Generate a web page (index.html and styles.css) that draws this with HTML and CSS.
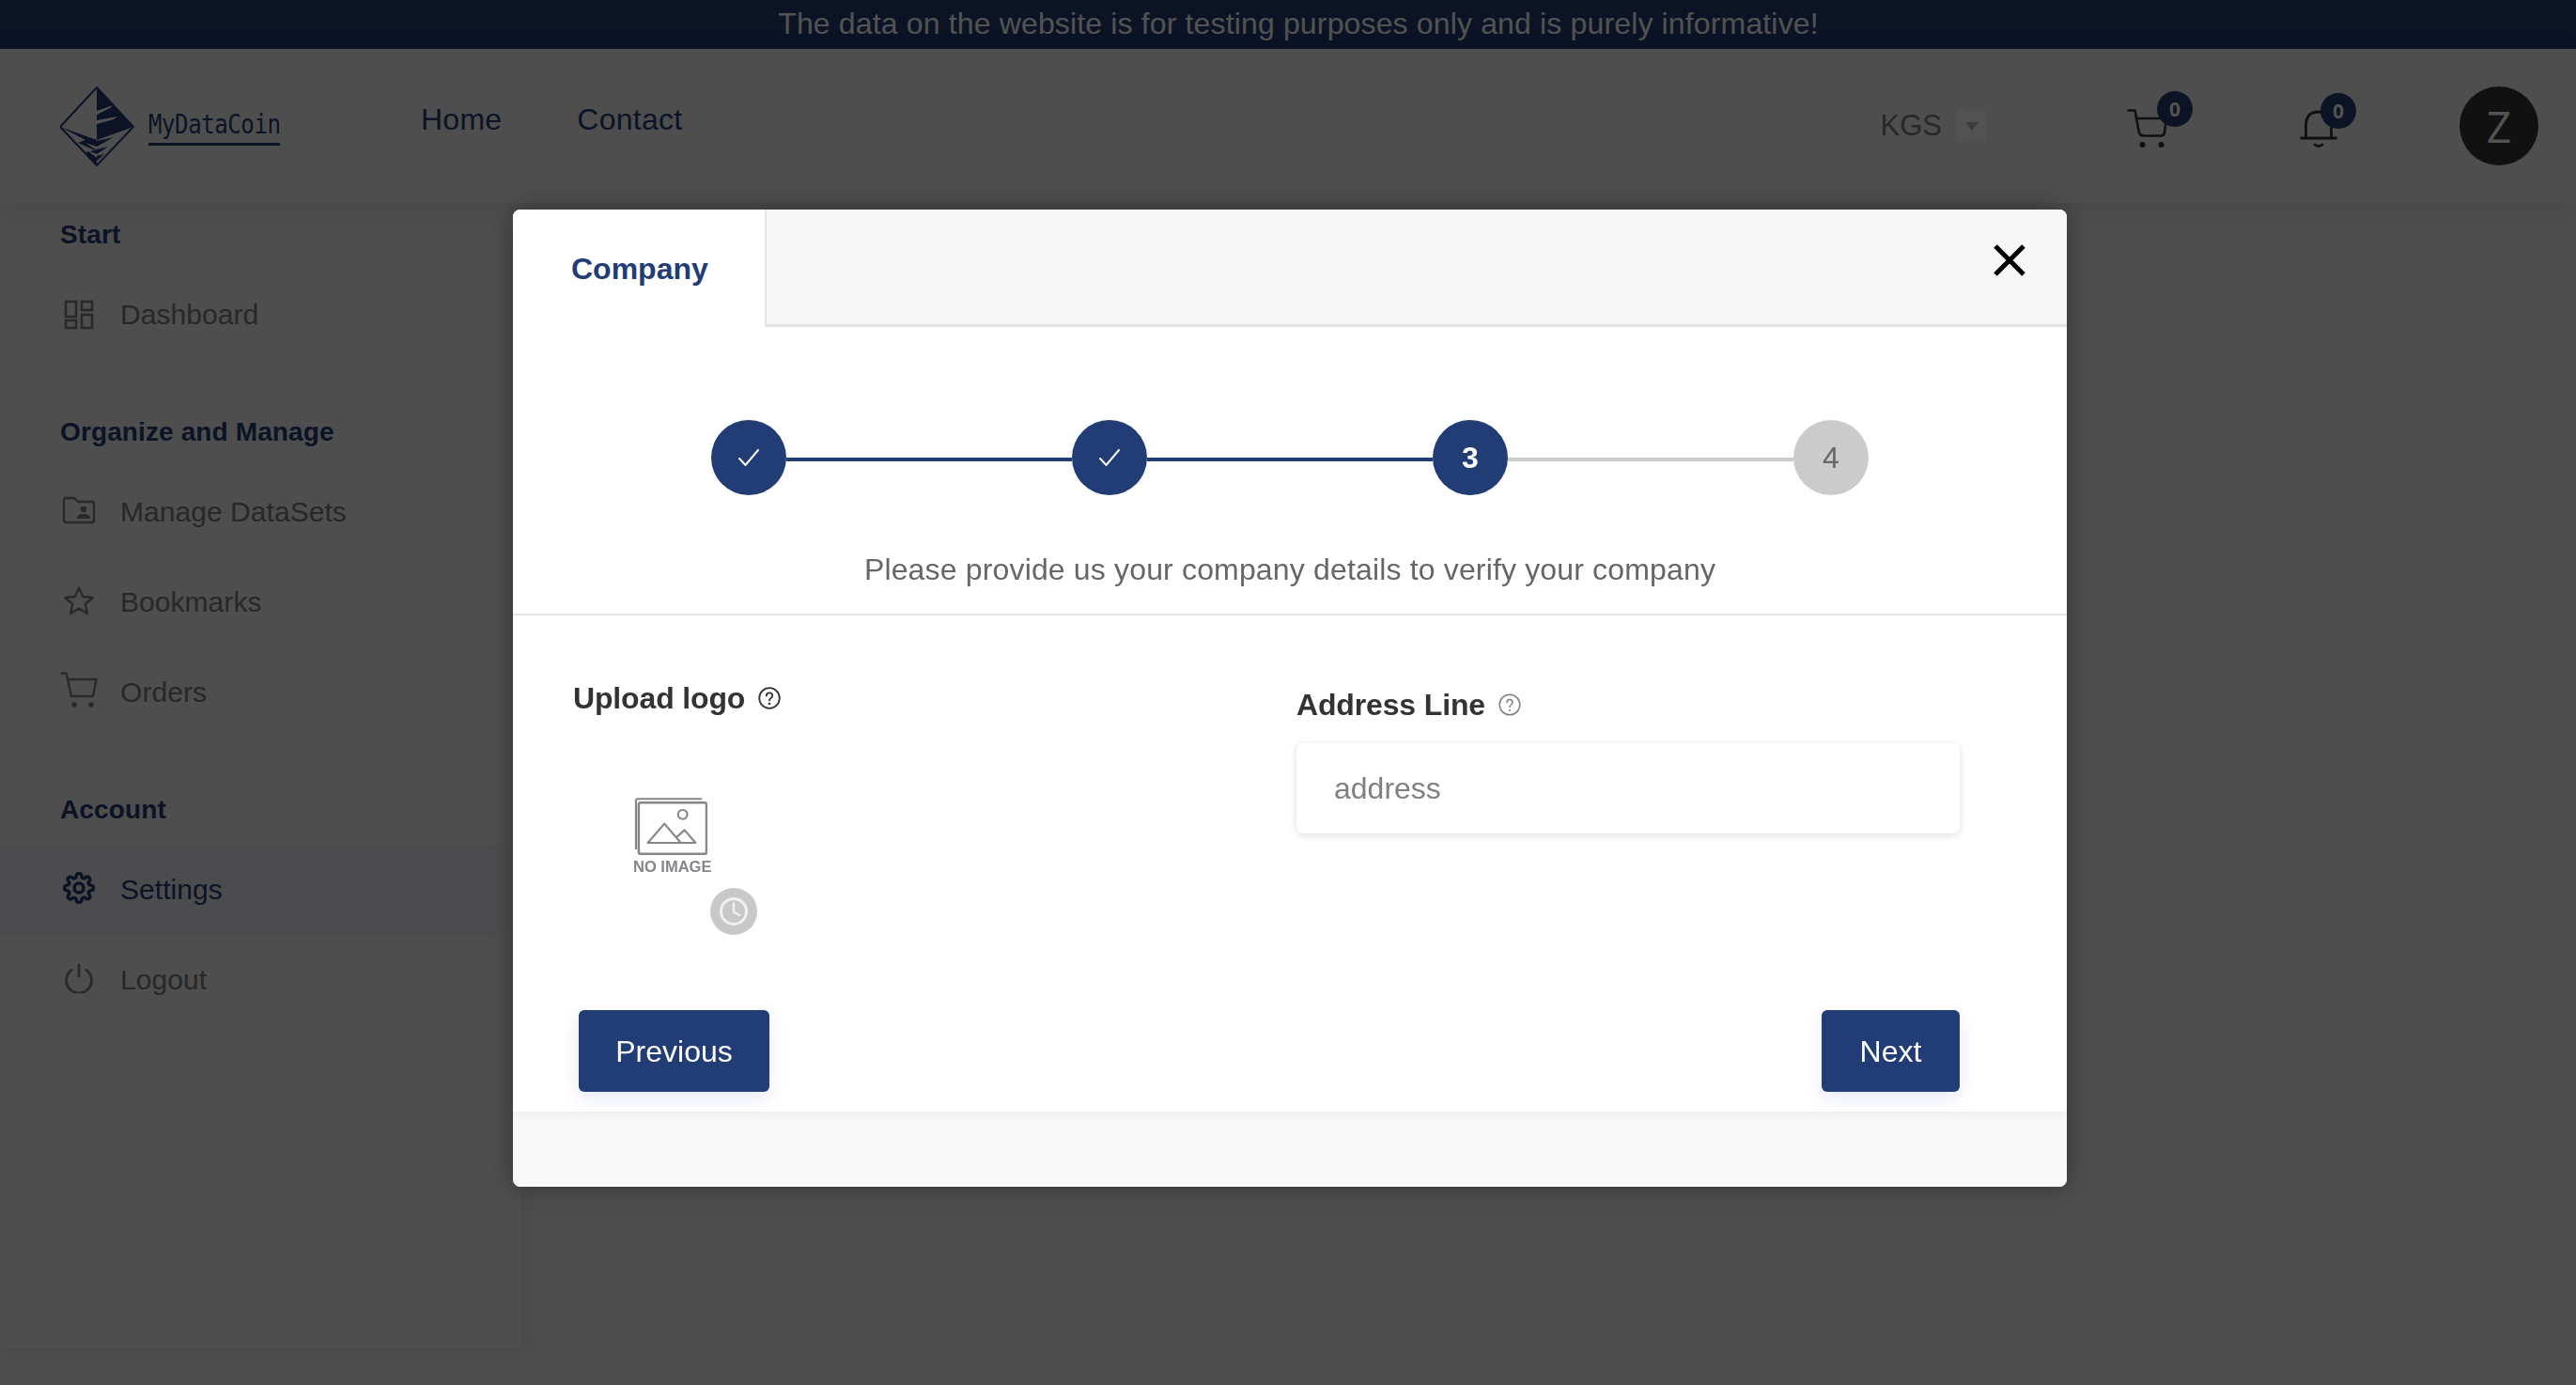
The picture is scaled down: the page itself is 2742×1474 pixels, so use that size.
FILE: index.html
```html
<!DOCTYPE html>
<html lang="en">
<head>
<meta charset="utf-8">
<title>MyDataCoin</title>
<link rel="stylesheet" href="styles.css">
</head>
<body>
<div class="banner">The data on the website is for testing purposes only and is purely informative!</div>
<header class="topbar">
  <div class="brand">
    <svg class="brand-mark" viewBox="9 6 80 85">
      <path d="M48 7 87 49 48 90 9 49Z" fill="none" stroke="#223c75" stroke-width="2"/>
      <path d="M48 7 87 49 48 63Z" fill="#223c75"/>
      <path d="M9 49 48 63V90L36 76 46 74 28 66 36 63Z" fill="#223c75"/>
      <path d="M48 64 66 60 48 70ZM48 73 60 70 48 78ZM48 80 56 78 48 85Z" fill="#223c75"/>
      <path d="M48 32 65 26 62 29 48 36ZM48 42 70 38 66 41 48 46Z" fill="#fff"/>
      <path d="M48 70 36 66 48 74ZM48 78 38 74 48 82Z" fill="#fff"/>
    </svg>
    <span class="brand-name"><span class="brand-text">MyDataCoin</span></span>
  </div>
  <nav class="topnav">
    <a class="topnav-link">Home</a>
    <a class="topnav-link">Contact</a>
  </nav>
  <div class="currency">
    <span class="currency-code">KGS</span>
    <span class="currency-drop"><i class="caret"></i></span>
  </div>
  <div class="tool tool-cart">
    <svg class="tool-icon" viewBox="14 26 42 42" fill="none" stroke="#333" stroke-width="2.6" stroke-linecap="round" stroke-linejoin="round">
      <path d="M15.5 27.5H22.5L26.5 49Q27.2 54.5 32 54.5H50Q53.5 54.5 54 51L56 36H24.5"/>
      <circle cx="30.5" cy="64" r="3" fill="#333" stroke="none"/>
      <circle cx="50.5" cy="64" r="3" fill="#333" stroke="none"/>
    </svg>
    <span class="count count-cart">0</span>
  </div>
  <div class="tool tool-bell">
    <svg class="tool-icon" viewBox="198 26 40 42" fill="none" stroke="#333" stroke-width="2.8" stroke-linecap="round" stroke-linejoin="round">
      <path d="M204.500 56V44Q204.500 29 218 29Q231.500 29 231.500 44V56"/>
      <path d="M199.500 57H236.500"/>
      <path d="M214 64Q218 67 222 64"/>
    </svg>
    <span class="count count-bell">0</span>
  </div>
  <div class="avatar">Z</div>
</header>

<div class="workspace">
  <aside class="sidebar">
    <h3 class="side-title side-title-first">Start</h3>
    <a class="side-item">
      <span class="side-icon">
        <svg width="32" height="32" viewBox="0 0 32 32" fill="none" stroke="#808080" stroke-width="2.6"><rect x="2" y="2" width="11" height="16"/><rect x="19" y="2" width="11" height="9"/><rect x="2" y="22" width="11" height="8"/><rect x="19" y="16" width="11" height="14"/></svg>
      </span>Dashboard
    </a>
    <h3 class="side-title">Organize and Manage</h3>
    <a class="side-item">
      <span class="side-icon side-icon-up">
        <svg width="36" height="30" viewBox="0 0 36 30" fill="none" stroke="#808080" stroke-width="2.4" stroke-linejoin="round"><path d="M2 26V4Q2 2 4 2H13L17 6H32Q34 6 34 8V26Q34 28 32 28H4Q2 28 2 26Z"/><circle cx="23" cy="14" r="3.200" fill="#808080" stroke="none"/><path d="M16 24Q16 19 23 19Q30 19 30 24Z" fill="#808080" stroke="none"/></svg>
      </span>Manage DataSets
    </a>
    <a class="side-item">
      <span class="side-icon side-icon-up">
        <svg width="34" height="32" viewBox="0 0 34 32" fill="none" stroke="#808080" stroke-width="2.400" stroke-linejoin="round"><path d="M17 2.500 21.300 12 31.500 13 23.800 19.800 26 30 17 24.800 8 30 10.200 19.800 2.500 13 12.700 12Z"/></svg>
      </span>Bookmarks
    </a>
    <a class="side-item">
      <span class="side-icon side-icon-up">
        <svg width="40" height="40" viewBox="0 0 40 40" fill="none" stroke="#808080" stroke-width="2.400" stroke-linecap="round" stroke-linejoin="round"><path d="M1.500 1.500H6.500L12 26H35L38.500 8H8"/><circle cx="15" cy="35" r="2.800" fill="#808080" stroke="none"/><circle cx="33" cy="35" r="2.800" fill="#808080" stroke="none"/></svg>
      </span>Orders
    </a>
    <h3 class="side-title">Account</h3>
    <a class="side-item side-item-active">
      <span class="side-icon side-icon-up">
        <svg width="34" height="34" viewBox="0 0 24 24" fill="none" stroke="#223c75" stroke-width="2.500" stroke-linejoin="round"><circle cx="12" cy="12" r="3.500"/><path d="M19.400 15a1.650 1.650 0 0 0 .33 1.820l.06.06a2 2 0 0 1 0 2.830 2 2 0 0 1-2.830 0l-.06-.06a1.650 1.650 0 0 0-1.820-.33 1.650 1.650 0 0 0-1 1.510V21a2 2 0 0 1-2 2 2 2 0 0 1-2-2v-.09A1.650 1.650 0 0 0 9 19.400a1.650 1.650 0 0 0-1.820.33l-.06.06a2 2 0 0 1-2.830 0 2 2 0 0 1 0-2.830l.06-.06a1.650 1.650 0 0 0 .33-1.820 1.650 1.650 0 0 0-1.510-1H3a2 2 0 0 1-2-2 2 2 0 0 1 2-2h.09A1.650 1.650 0 0 0 4.600 9a1.650 1.650 0 0 0-.33-1.820l-.06-.06a2 2 0 0 1 0-2.830 2 2 0 0 1 2.830 0l.06.06a1.650 1.650 0 0 0 1.820.33H9a1.650 1.650 0 0 0 1-1.510V3a2 2 0 0 1 2-2 2 2 0 0 1 2 2v.09a1.650 1.650 0 0 0 1 1.510 1.650 1.650 0 0 0 1.820-.33l.06-.06a2 2 0 0 1 2.830 0 2 2 0 0 1 0 2.830l-.06.06a1.650 1.650 0 0 0-.33 1.820V9a1.650 1.650 0 0 0 1.510 1H21a2 2 0 0 1 2 2 2 2 0 0 1-2 2h-.09a1.650 1.650 0 0 0-1.510 1z"/></svg>
      </span>Settings
    </a>
    <a class="side-item">
      <span class="side-icon side-icon-up">
        <svg width="32" height="32" viewBox="0 0 32 32" fill="none" stroke="#808080" stroke-width="2.800" stroke-linecap="round"><path d="M16 2V14"/><path d="M8 7.500A13.500 13.500 0 1 0 24 7.500"/></svg>
      </span>Logout
    </a>
  </aside>
</div>

<div class="overlay">
  <section class="modal">
    <div class="modal-head">
      <div class="modal-tab">Company</div>
      <div class="modal-tabrest">
        <svg class="close" viewBox="0 0 34 34" stroke="#000" stroke-width="5"><path d="M2 2 32 32M32 2 2 32"/></svg>
      </div>
    </div>

    <div class="steps">
      <span class="step step-on"><svg width="22" height="18" viewBox="0 0 22 18" fill="none" stroke="#fff" stroke-width="2" stroke-linecap="round"><path d="M1 10 7.500 17 21 1"/></svg></span>
      <span class="step-line step-line-on"></span>
      <span class="step step-on"><svg width="22" height="18" viewBox="0 0 22 18" fill="none" stroke="#fff" stroke-width="2" stroke-linecap="round"><path d="M1 10 7.500 17 21 1"/></svg></span>
      <span class="step-line step-line-on"></span>
      <span class="step step-on step-num">3</span>
      <span class="step-line"></span>
      <span class="step step-off">4</span>
    </div>
    <p class="lead">Please provide us your company details to verify your company</p>

    <div class="form">
      <div class="fields">
        <div class="field-logo">
          <div class="label">Upload logo
            <svg class="help" viewBox="0 0 24 24" fill="none" stroke="#333" stroke-width="1.800"><circle cx="12" cy="12" r="10.800"/><path d="M8.800 9.500Q8.800 6.300 12 6.300T15.200 9.300Q15.200 11 13.600 12T12 14.500" stroke-linecap="round"/><circle cx="12" cy="18" r="1.300" fill="#333" stroke="none"/></svg>
          </div>
          <div class="noimage">
            <svg class="noimage-art" width="78" height="61" viewBox="0 0 80 62" fill="none" stroke="#85868a" stroke-width="2.200" stroke-linejoin="round"><path d="M2 56V3Q2 1 4 1H74"/><rect x="5" y="5" width="74" height="56" rx="2" stroke-width="2.600"/><circle cx="53" cy="18" r="5"/><path d="M15 49 33 28 51 49ZM46 43 55 35 67 49H45" /></svg>
            <span class="noimage-text">NO IMAGE</span>
            <span class="pending">
              <svg width="30" height="30" viewBox="0 0 30 30" fill="none" stroke="#f0f0f0" stroke-width="3"><circle cx="15" cy="15" r="13.500"/><path d="M15 6.500V15.500L21 19" stroke-linecap="round" stroke-width="2.500"/></svg>
            </span>
          </div>
        </div>
        <div class="field-address">
          <div class="label">Address Line
            <svg class="help help-soft" viewBox="0 0 24 24" fill="none" stroke="#808080" stroke-width="1.500"><circle cx="12" cy="12" r="10.800"/><path d="M9 9.500Q9 6.500 12 6.500T15 9.300Q15 11 13.500 12T12 14.500" stroke-linecap="round"/><circle cx="12" cy="18" r="1.100" fill="#808080" stroke="none"/></svg>
          </div>
          <div class="input">address</div>
        </div>
      </div>
      <div class="actions">
        <button class="btn btn-prev">Previous</button>
        <button class="btn btn-next">Next</button>
      </div>
    </div>
    <div class="modal-foot"></div>
  </section>
</div>
</body>
</html>
```
FILE: styles.css
```css
* { box-sizing: border-box; }
html, body { margin: 0; height: 100%; }
body {
  width: 2742px;
  height: 1474px;
  overflow: hidden;
  background: #f0f0f0;
  font-family: "Liberation Sans", Arial, sans-serif;
  display: flex;
  flex-direction: column;
}

.banner {
  height: 52px;
  flex: none;
  background: #223c75;
  color: #fff;
  font-size: 32px;
  letter-spacing: .15px;
  line-height: 50px;
  text-align: center;
  padding-left: 22px;
}

.topbar {
  height: 164px;
  flex: none;
  display: flex;
  align-items: center;
  padding: 0 40px 0 64px;
  background: #f3f3f3;
  box-shadow: 0 4px 24px rgba(0, 0, 0, .08);
  position: relative;
  z-index: 1;
}
.brand { display: flex; align-items: center; width: 234px; }
.brand-mark { width: 80px; height: 85px; flex: none; margin-right: 14px; }
.brand-name {
  display: block;
  margin-top: 6px;
  width: 140px;
  font-family: "DejaVu Sans Mono", monospace;
  font-size: 24px;
  letter-spacing: -.4px;
  color: #223c75;
  line-height: 30px;
  padding-bottom: 2px;
  border-bottom: 3px solid #223c75;
  white-space: nowrap;
}
.brand-text { display: block; transform: scaleY(1.15); transform-origin: center bottom; }
.topnav { display: flex; gap: 80px; margin-left: 150px; padding-bottom: 14px; }
.topnav-link { font-size: 32px; letter-spacing: .25px; color: #223c75; line-height: 40px; }

.currency { margin-left: auto; display: flex; align-items: center; gap: 16px; margin-right: 149px; }
.currency-code { font-size: 31px; color: #7c7c7c; }
.currency-drop {
  width: 32px; height: 34px;
  background: #fff;
  border-radius: 4px;
  display: flex; align-items: center; justify-content: center;
}
.caret {
  width: 0; height: 0;
  border-left: 7px solid transparent;
  border-right: 7px solid transparent;
  border-top: 9px solid #b8b8b8;
}

.tool { position: relative; width: 42px; height: 42px; margin-top: 6px; }
.tool-bell { width: 40px; margin-left: 142px; margin-right: 130px; }
.tool-icon { display: block; width: 100%; height: 100%; }
.count {
  position: absolute;
  width: 38px; height: 38px;
  border-radius: 50%;
  background: #223c75;
  color: #fff;
  font-size: 21px;
  font-weight: 700;
  font-family: "Open Sans", sans-serif;
  display: flex; align-items: center; justify-content: center;
}
.count-cart { left: 32px; top: -19px; }
.count-bell { left: 22px; top: -17px; }
.avatar {
  width: 84px; height: 84px;
  border-radius: 50%;
  background: #353535;
  color: #fff;
  font-size: 46px;
  display: flex; align-items: center; justify-content: center;
  font-family: "Open Sans", sans-serif;
}

.workspace { flex: 1; display: flex; min-height: 0; }
.sidebar {
  width: 555px;
  height: 1218px;
  background: #f1f1f1;
  box-shadow: 4px 4px 14px rgba(0, 0, 0, .08);
  padding-top: 14px;
}
.side-title {
  margin: 57px 0 17px;
  padding-left: 64px;
  font-size: 28px;
  letter-spacing: .12px;
  line-height: 40px;
  font-weight: 700;
  color: #223c75;
}
.side-title-first { margin-top: 0; }
.side-item {
  height: 96px;
  display: flex;
  align-items: center;
  padding-left: 64px;
  font-size: 30px;
  letter-spacing: .05px;
  color: #7c7c7c;
}
.side-item-active { color: #223c75; background: #ecedf2; }
.side-icon { width: 40px; margin-right: 24px; display: flex; justify-content: center; }
.side-icon-up { padding-bottom: 4px; }

.overlay {
  position: fixed;
  inset: 0;
  z-index: 10;
  background: rgba(0, 0, 0, .68);
  padding: 223px 0 0 546px;
}
.modal {
  width: 1654px;
  height: 1040px;
  border-radius: 8px;
  overflow: hidden;
  background: #fff;
  box-shadow: 0 0 30px rgba(0, 0, 0, .35);
  display: flex;
  flex-direction: column;
}
.modal-head { display: flex; height: 125px; flex: none; }
.modal-tab {
  width: 268px;
  padding-left: 62px;
  font-size: 32px;
  font-weight: 700;
  line-height: 72px;
  padding-top: 27px;
  color: #223c75;
  background: #fff;
}
.modal-tabrest {
  flex: 1;
  display: flex;
  justify-content: flex-end;
  align-items: flex-start;
  background: #f7f7f7;
  border-left: 2px solid #e4e4e4;
  border-bottom: 3px solid #e4e4e4;
  padding: 37px 44px 0 0;
}
.close { width: 34px; height: 34px; display: block; }

.steps {
  width: 1232px;
  margin: 99px auto 0;
  display: flex;
  align-items: center;
  flex: none;
}
.step {
  width: 80px; height: 80px;
  flex: none;
  border-radius: 50%;
  display: flex; align-items: center; justify-content: center;
  font-size: 32px;
}
.step-on { background: #223c75; color: #fff; }
.step-num { font-weight: 700; }
.step-off { background: #cbcbcb; color: #666; }
.step-line { flex: 1; height: 4px; background: #cbcbcb; margin-top: 4px; }
.step-line-on { background: #223c75; }

.lead {
  margin: 59px 0 0;
  padding-bottom: 27px;
  font-size: 32px;
  letter-spacing: .16px;
  line-height: 40px;
  text-align: center;
  color: #666;
  border-bottom: 2px solid #e6e6e6;
  flex: none;
}

.form {
  height: 528px;
  flex: none;
  display: flex;
  flex-direction: column;
  padding-top: 68px;
  box-shadow: 0 4px 12px rgba(0, 0, 0, .05);
  position: relative;
}
.fields { display: flex; padding-left: 64px; }
.field-logo { width: 770px; }
.field-address { width: 706px; padding-top: 7px; }
.label {
  font-size: 32px;
  line-height: 40px;
  font-weight: 700;
  color: #333;
  letter-spacing: -.15px;
  display: flex;
  align-items: center;
  gap: 14px;
}
.help { width: 24px; height: 24px; display: block; }
.noimage {
  position: relative;
  width: 131px;
  margin: 86px 0 0 65px;
}
.noimage-art { display: block; }
.noimage-text {
  display: block;
  margin-top: 3px;
  font-size: 16.5px;
  line-height: 18px;
  font-weight: 700;
  color: #85868a;
  white-space: nowrap;
  margin-left: -1px;
}
.pending {
  position: absolute;
  left: 81px; top: 96px;
  width: 50px; height: 50px;
  border-radius: 50%;
  background: #c8c8c8;
  display: flex; align-items: center; justify-content: center;
}
.input {
  margin-top: 21px;
  height: 96px;
  border-radius: 8px;
  background: #fff;
  box-shadow: 0 2px 8px rgba(0, 0, 0, .14);
  padding-left: 40px;
  font-size: 32px;
  line-height: 96px;
  color: #808080;
}
.actions {
  margin-top: auto;
  padding: 0 114px 21px 70px;
  display: flex;
  justify-content: space-between;
}
.btn {
  height: 87px;
  padding: 2px 0 0;
  border: 0;
  border-radius: 6px;
  background: #223c75;
  color: #fff;
  font: 32px "Liberation Sans", Arial, sans-serif;
  box-shadow: 0 6px 18px rgba(70, 90, 220, .14);
}
.btn-prev { width: 203px; }
.btn-next { width: 147px; }
.modal-foot { flex: 1; background: #f9f9f9; }
```
